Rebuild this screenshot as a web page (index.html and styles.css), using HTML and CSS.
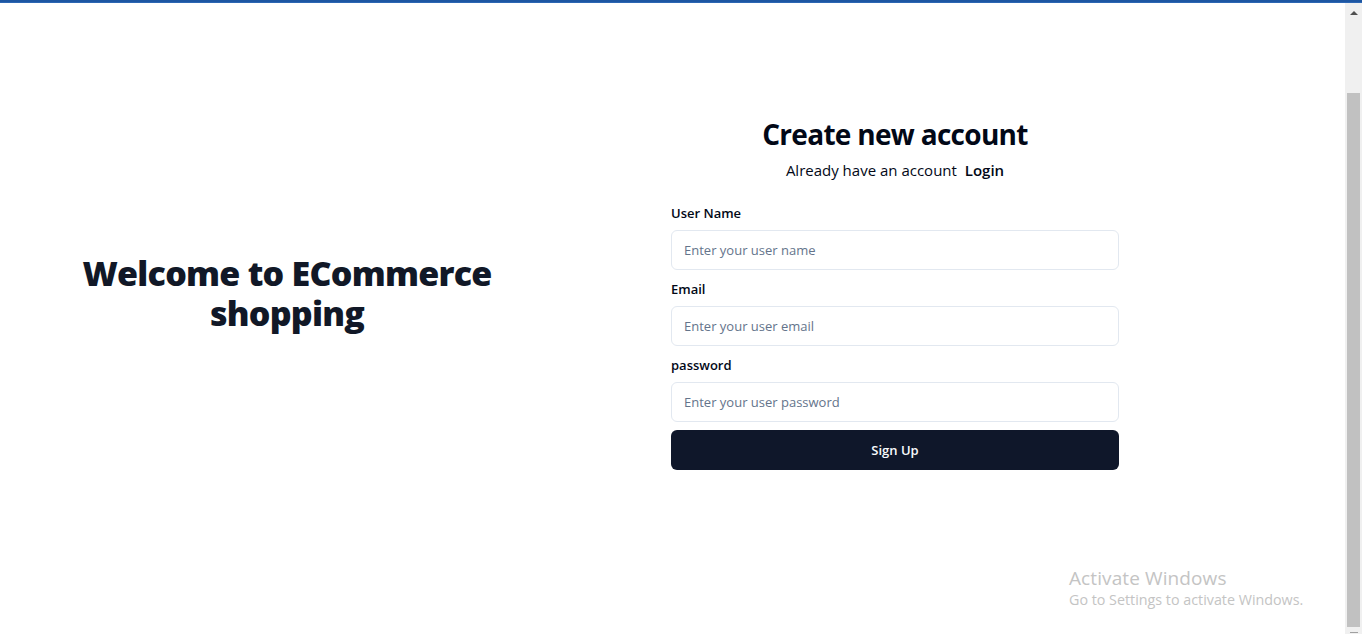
FILE: index.html
```html
<!DOCTYPE html>
<html lang="en">
<head>
<meta charset="utf-8">
<title>Sign Up</title>
<link rel="stylesheet" href="styles.css">
</head>
<body>
<div class="topbar"></div>
<div class="window">
  <main class="page">
    <section class="welcome">
      <h1 class="welcome-title">Welcome to ECommerce shopping</h1>
    </section>
    <section class="auth">
      <div class="auth-box">
        <div class="auth-head">
          <h2 class="auth-title">Create new account</h2>
          <p class="auth-sub">Already have an account <a class="auth-link" href="#">Login</a></p>
        </div>
        <form class="form">
          <div class="field">
            <label class="label" for="u">User Name</label>
            <input class="input" id="u" type="text" placeholder="Enter your user name">
          </div>
          <div class="field">
            <label class="label" for="e">Email</label>
            <input class="input" id="e" type="email" placeholder="Enter your user email">
          </div>
          <div class="field">
            <label class="label" for="p">password</label>
            <input class="input" id="p" type="password" placeholder="Enter your user password">
          </div>
          <button class="btn" type="button">Sign Up</button>
        </form>
      </div>
    </section>
    <div class="watermark">
      <div class="wm-title">Activate Windows</div>
      <div class="wm-sub">Go to Settings to activate Windows.</div>
    </div>
  </main>
  <aside class="scrollbar">
    <div class="sb-up"></div>
    <div class="sb-thumb"></div>
    <div class="sb-down"></div>
  </aside>
</div>
</body>
</html>
```
FILE: styles.css
```css
* { box-sizing: border-box; }
html, body { margin: 0; padding: 0; }
body {
  width: 1362px;
  height: 634px;
  overflow: hidden;
  background: #ffffff;
  font-family: "Open Sans", "Noto Sans", "Liberation Sans", sans-serif;
  color: #020817;
}
.topbar {
  height: 3px;
  background: #1d56a2;
  border-bottom: 1px solid #2c66b3;
}
.window {
  display: flex;
  height: 631px;
}
.page {
  position: relative;
  flex: 1;
  display: flex;
  align-items: center;
  padding-bottom: 51px;
}
.welcome {
  width: 574px;
  display: flex;
  justify-content: center;
}
.welcome-title {
  margin: 0;
  width: 448px;
  text-align: center;
  font-size: 34px;
  line-height: 40px;
  font-weight: 800;
  letter-spacing: -0.75px;
  color: #111827;
}
.auth {
  flex: 1;
  padding-left: 97px;
}
.auth-box {
  width: 448px;
}
.auth-head {
  text-align: center;
}
.auth-title {
  margin: 0;
  font-size: 28px;
  line-height: 36px;
  font-weight: 700;
  letter-spacing: -0.7px;
  color: #020817;
}
.auth-sub {
  margin: 6px 0 0;
  font-size: 15px;
  line-height: 24px;
  color: #020817;
}
.auth-link {
  margin-left: 4px;
  font-weight: 600;
  color: #020817;
  text-decoration: none;
}
.form {
  margin-top: 21px;
  display: flex;
  flex-direction: column;
}
.field {
  display: flex;
  flex-direction: column;
  gap: 7px;
  margin-bottom: 9px;
}
.label {
  font-size: 13px;
  line-height: 20px;
  font-weight: 600;
  color: #020817;
}
.input {
  height: 40px;
  width: 100%;
  border: 1px solid #e2e8f0;
  border-radius: 6px;
  padding: 0 12px;
  font-family: inherit;
  font-size: 13px;
  color: #020817;
  background: #ffffff;
  outline: none;
}
.input::placeholder { color: #64748b; }
.btn {
  margin-top: -1px;
  height: 40px;
  width: 100%;
  border: 0;
  border-radius: 6px;
  background: #0f172a;
  color: #f8fafc;
  font-family: inherit;
  font-size: 13px;
  font-weight: 600;
}
.watermark {
  position: absolute;
  left: 1069px;
  top: 563px;
  font-family: "Open Sans", "Noto Sans", sans-serif;
  color: #c4c4c4;
}
.wm-title { font-size: 19px; line-height: 24px; letter-spacing: 0.1px; }
.wm-sub { font-size: 14.3px; line-height: 20px; }
.scrollbar {
  width: 17px;
  background: #f0f0f0;
  display: flex;
  flex-direction: column;
  align-items: center;
}
.sb-up {
  margin-top: 8px;
  width: 0;
  height: 0;
  border-left: 4px solid transparent;
  border-right: 4px solid transparent;
  border-bottom: 4px solid #505050;
}
.sb-thumb {
  margin-top: 78px;
  width: 13px;
  height: 534px;
  background: #c1c1c1;
}
.sb-down {
  margin-top: 5px;
  width: 8px;
  height: 1px;
  background: #a0a0a0;
}
```
